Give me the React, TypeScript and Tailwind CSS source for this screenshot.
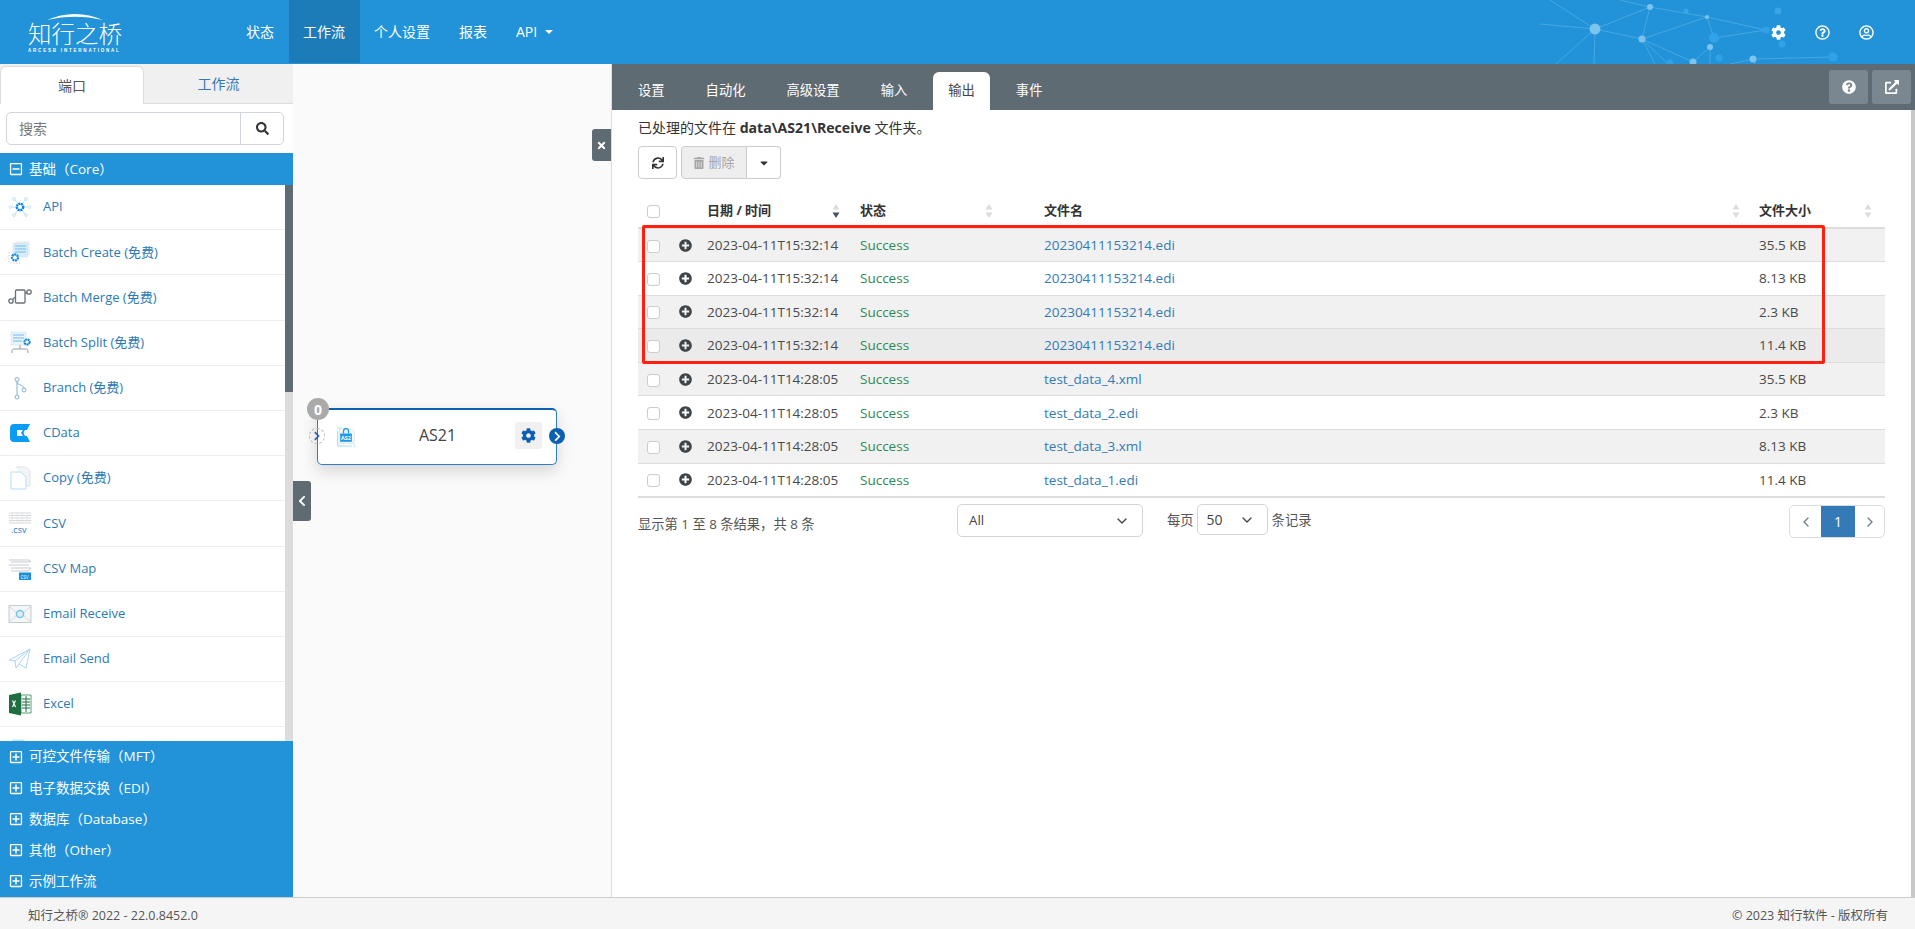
import React from "react";
import {
  FaCog, FaRegQuestionCircle, FaRegUserCircle, FaQuestionCircle, FaExternalLinkAlt, FaSearch, FaTimes,
  FaChevronLeft, FaChevronRight, FaPlusCircle, FaRegPlusSquare, FaRegMinusSquare, FaSync, FaTrashAlt, FaCaretDown,
} from "react-icons/fa";
import { ChevronDown, ChevronLeft, ChevronRight } from "lucide-react";

const cn = "font-['Open_Sans','Noto_Sans_CJK_SC',sans-serif]";

const Icons: Record<string, React.ReactNode> = {
  api: (
    <svg viewBox="0 0 24 24" className="w-6 h-6" fill="none">
      <g stroke="#b9d9ee" strokeWidth="0.8">
        <circle cx="2.5" cy="12" r="1.4" /><circle cx="21.5" cy="12" r="1.4" /><circle cx="6" cy="4" r="1.4" /><circle cx="18" cy="4" r="1.4" /><circle cx="6" cy="20" r="1.4" /><circle cx="18" cy="20" r="1.4" />
        <path d="M4 12h4M16 12h4M7 5l3 4M17 5l-3 4M7 19l3-4M17 19l-3-4" />
      </g>
      <circle cx="12" cy="12" r="3.2" stroke="#0a84e0" strokeWidth="2.4" strokeDasharray="2 .6" />
    </svg>
  ),
  create: (
    <svg viewBox="0 0 24 24" className="w-6 h-6" fill="none">
      <rect x="8" y="1" width="14" height="14" fill="#eef3f7" />
      <rect x="5" y="3" width="15" height="14" fill="#d9ecfa" stroke="#c8dff0" strokeWidth=".5" />
      <path d="M7 6h11M7 9h11M7 12h11" stroke="#6cbcf0" />
      <path d="M1 12v11h11" stroke="#c2c7cc" strokeWidth=".8" strokeDasharray="1.5 1.5" />
      <circle cx="7" cy="17.5" r="3" stroke="#0a84e0" strokeWidth="2.2" strokeDasharray="2 .6" fill="#fff" />
    </svg>
  ),
  merge: (
    <svg viewBox="0 0 24 24" className="w-6 h-6" fill="none" stroke="#6b7075" strokeWidth="1.3">
      <rect x="7.5" y="5" width="9.5" height="13" rx="1" /><circle cx="3" cy="16" r="2.2" /><circle cx="21" cy="7" r="2.2" />
      <path d="M5 14l2.5-2M17 8h2" />
    </svg>
  ),
  split: (
    <svg viewBox="0 0 24 24" className="w-6 h-6" fill="none">
      <rect x="3" y="1" width="15" height="13" fill="#e8f3fb" stroke="#cfe2f0" strokeWidth=".6" />
      <path d="M5 4h11M5 7h11M5 10h9" stroke="#6cbcf0" />
      <path d="M12 14v4M4 22v-2c0-1.5 1-2 2-2h12c1 0 2 .5 2 2v2" stroke="#8b9096" strokeWidth=".9" />
      <circle cx="19" cy="11" r="2.6" stroke="#0a84e0" strokeWidth="2" strokeDasharray="2 .5" fill="#fff" />
    </svg>
  ),
  branch: (
    <svg viewBox="0 0 24 24" className="w-6 h-6" fill="none" stroke="#7fb4d6" strokeWidth="1">
      <circle cx="9" cy="3.5" r="2" /><circle cx="9" cy="21" r="2" /><circle cx="16" cy="14" r="2" />
      <path d="M9 5.5V19M9 6c0 3 7 3 7 6" />
    </svg>
  ),
  cdata: (
    <svg viewBox="0 0 24 24" className="w-6 h-6">
      <path d="M6 3h16l-3 6h-1c-3 0-3 6 0 6h1l3 6H6c-2.500 0-4-1.500-4-4V7c0-2.500 1.500-4 4-4z" fill="#0a9cf5" />
      <path d="M9 9h6l-2 3 2 3H9z" fill="#fff" />
    </svg>
  ),
  copy: (
    <svg viewBox="0 0 24 24" className="w-6 h-6" fill="none">
      <path d="M8 1h10l4 4v15H18" stroke="#dfe3e6" fill="#f2f4f5" />
      <path d="M3 6h10l5 5v12H3z" fill="#fff" stroke="#b5def7" />
    </svg>
  ),
  csv: (
    <svg viewBox="0 0 24 24" className="w-6 h-6">
      <path d="M1 2h22M1 4.500h22M1 7h22M1 9.500h22M1 12h22" stroke="#d4d7da" />
      <path d="M4 1v12M9 1v12M14 1v12M19 1v12" stroke="#e4e6e8" />
      <text x="3" y="22" fontSize="9" fontFamily="'Open Sans',sans-serif" fill="#1e80c8">.csv</text>
    </svg>
  ),
  csvmap: (
    <svg viewBox="0 0 24 24" className="w-6 h-6">
      <path d="M1 3h20l2 2H3M1 8h20M3 11h20l-3 3H3" stroke="#c5cacf" fill="none" />
      <rect x="11" y="15.500" width="12" height="7.500" fill="#1a8fdc" />
      <text x="12.500" y="21.500" fontSize="4.500" fontFamily="'Open Sans',sans-serif" fill="#fff">CSV</text>
    </svg>
  ),
  receive: (
    <svg viewBox="0 0 24 24" className="w-6 h-6" fill="none">
      <rect x="1" y="3.500" width="22" height="17" fill="#f5f6f7" stroke="#c6cbcf" />
      <path d="M1 4l8 7M23 4l-8 7M1 20l7-6M23 20l-7-6" stroke="#d5d8db" />
      <circle cx="12" cy="12" r="3.600" stroke="#7ac0ee" strokeWidth="1.500" fill="#dcedf9" />
    </svg>
  ),
  send: (
    <svg viewBox="0 0 24 24" className="w-6 h-6" fill="none" stroke="#a8d7f5" strokeWidth="1">
      <path d="M1.500 13L22 2 18 21l-7-4-3 4-1-7z" /><path d="M22 2L7 14M22 2L11 17" />
    </svg>
  ),
  excel: (
    <svg viewBox="0 0 24 24" className="w-6 h-6">
      <path d="M13 3h10v18H13z" fill="#fff" stroke="#1d6f42" strokeWidth=".7" />
      <path d="M14 7h8M14 10h8M14 13h8M14 16h8M18 4v16" stroke="#1d6f42" strokeWidth="1" />
      <path d="M1 3l12-2.500v23L1 21z" fill="#1d6f42" />
      <path d="M4.500 8.500l3 6.500M7.500 8.500l-3 6.500" stroke="#fff" strokeWidth="1.200" />
    </svg>
  ),
  file: (
    <svg viewBox="0 0 24 24" className="w-6 h-6" fill="none">
      <path d="M5 3h10l5 5v14H5z" fill="#d8eaf7" stroke="#b5def7" />
    </svg>
  ),
};

const items: [string, string][] = [
  ["api", "API"], ["create", "Batch Create (免费)"], ["merge", "Batch Merge (免费)"], ["split", "Batch Split (免费)"],
  ["branch", "Branch (免费)"], ["cdata", "CData"], ["copy", "Copy (免费)"], ["csv", "CSV"], ["csvmap", "CSV Map"],
  ["receive", "Email Receive"], ["send", "Email Send"], ["excel", "Excel"], ["file", ""],
];

const groups = ["可控文件传输（MFT）", "电子数据交换（EDI）", "数据库（Database）", "其他（Other）", "示例工作流"];

const rows = [
  ["2023-04-11T15:32:14", "20230411153214.edi", "35.5 KB"],
  ["2023-04-11T15:32:14", "20230411153214.edi", "8.13 KB"],
  ["2023-04-11T15:32:14", "20230411153214.edi", "2.3 KB"],
  ["2023-04-11T15:32:14", "20230411153214.edi", "11.4 KB"],
  ["2023-04-11T14:28:05", "test_data_4.xml", "35.5 KB"],
  ["2023-04-11T14:28:05", "test_data_2.edi", "2.3 KB"],
  ["2023-04-11T14:28:05", "test_data_3.xml", "8.13 KB"],
  ["2023-04-11T14:28:05", "test_data_1.edi", "11.4 KB"],
];

function Sort({ active }: { active?: boolean }) {
  return (
    <svg viewBox="0 0 8 16" className="w-2 h-4 shrink-0">
      <path d="M4 1l3.500 5.500h-7z" fill="#dcdcdc" />
      <path d="M4 15L.5 9.500h7z" fill={active ? "#4a5560" : "#dcdcdc"} />
    </svg>
  );
}

function Network() {
  const lines = [
    [1595, 29, 1650, 7], [1595, 29, 1642, 39], [1650, 7, 1642, 39], [1650, 7, 1707, 17], [1642, 39, 1707, 17],
    [1642, 39, 1693, 62], [1642, 39, 1668, 64], [1642, 39, 1655, 64], [1595, 29, 1594, 64], [1595, 29, 1556, 64], [1595, 29, 1550, 0],
    [1595, 29, 1540, 24], [1714, 38, 1766, 30], [1707, 17, 1766, 30], [1693, 62, 1710, 47], [1710, 47, 1710, 64],
    [1753, 59, 1833, 57], [1620, 0, 1650, 7], [1753, 59, 1730, 64], [1707, 17, 1714, 38], [1753, 59, 1755, 64],
  ];
  const nodes: [number, number, number, string][] = [
    [1595, 29, 5.5, "#7cc3ee"], [1650, 7, 3, "#7cc3ee"], [1707, 17, 2, "#7cc3ee"], [1642, 39, 3.5, "#7cc3ee"],
    [1686, 11, 2.5, "#3aa4e6"], [1714, 38, 5, "#2ea3ea"], [1710, 47, 3, "#7cc3ee"], [1719, 58, 3.5, "#2ea3ea"],
    [1693, 62, 3.5, "#7cc3ee"], [1670, 63, 3.5, "#2ea3ea"], [1753, 59, 3.5, "#7cc3ee"], [1766, 30, 3.5, "#2ea3ea"],
    [1778, 11, 3.5, "#3aa4e6"], [1782, 44, 3.5, "#2ea3ea"], [1833, 57, 4.5, "#2ea3ea"],
  ];
  return (
    <svg viewBox="1500 0 415 64" className="absolute right-0 top-0 w-[415px] h-16 pointer-events-none">
      {lines.map((l, i) => (
        <line key={i} x1={l[0]} y1={l[1]} x2={l[2]} y2={l[3]} stroke="#6fbdec" strokeOpacity=".6" strokeWidth=".8" />
      ))}
      {nodes.map((n, i) => (
        <circle key={i} cx={n[0]} cy={n[1]} r={n[2]} fill={n[3]} />
      ))}
    </svg>
  );
}

function Header() {
  const nav = ["状态", "工作流", "个人设置", "报表"];
  return (
    <header className="relative h-16 shrink-0 bg-[#2293d8] flex text-white">
      <Network />
      <div className="w-[231.500px] relative flex flex-col items-start pl-[28px] pt-[12px]">
        <svg viewBox="0 0 56 8" className="absolute left-[47px] top-[13px] w-[56px] h-2">
          <path d="M0 7C18 -1 38 -1 56 7C38 2.500 18 2.500 0 7z" fill="#fff" />
        </svg>
        <div className="mt-[7px] text-[23.5px] leading-[28px] font-light whitespace-nowrap font-['Noto_Sans_CJK_SC',sans-serif]">知行之桥</div>
        <div className="mt-[1px] text-[4.5px] leading-[6px] font-bold tracking-[1.8px] whitespace-nowrap font-['Liberation_Sans',sans-serif]">ARCESB INTERNATIONAL</div>
      </div>
      <nav className="flex text-[14px] relative">
        {nav.map((n) => (
          <div key={n} className={`h-[63px] flex items-center px-[14.5px] ${n === "工作流" ? "bg-[#1c7cb8]" : ""}`}>{n}</div>
        ))}
        <div className="h-[63px] flex items-center px-[14.5px] gap-2">
          <span>API</span>
          <svg viewBox="0 0 8 4" className="w-2 h-1"><path d="M0 0h8L4 4z" fill="#fff" /></svg>
        </div>
      </nav>
      <div className="relative ml-auto flex items-center gap-[29px] pr-[41px] text-[15px]">
        <FaCog /><FaRegQuestionCircle /><FaRegUserCircle />
      </div>
    </header>
  );
}

function Sidebar() {
  return (
    <aside className="w-[293px] shrink-0 flex flex-col bg-white relative">
      <div className="h-10 shrink-0 flex bg-[#f0f0f0] text-[14px] pt-[2px] border-b border-[#ddd]">
        <div className="w-[144px] h-[38px] bg-white border border-b-0 border-[#ddd] rounded-t-[6px] flex items-center justify-center text-[#555]">端口</div>
        <div className="flex-1 flex items-center justify-center text-[#337ab7] pb-[2px]">工作流</div>
      </div>
      <div className="h-[49px] shrink-0 px-[6px] pt-[8px]">
        <div className="h-[33px] w-[278px] flex border border-[#d0d4dc] rounded-[5px]">
          <div className="flex-1 flex items-center pl-3 text-[14px] text-[#777]">搜索</div>
          <div className="w-[43px] border-l border-[#d0d4dc] flex items-center justify-center text-[#333] text-[13px]"><FaSearch /></div>
        </div>
      </div>
      <div className="h-8 shrink-0 bg-[#2293d8] text-white text-[13.5px] flex items-center pl-[9px] gap-[6px]">
        <FaRegMinusSquare className="text-[14px]" /><span>基础（Core）</span>
      </div>
      <div className="flex-1 min-h-0 flex overflow-hidden">
        <div className="flex-1 min-w-0">
          {items.map(([k, t]) => (
            <div key={k} className="h-[45.2px] border-b border-[#eee] flex items-center pl-[8px] gap-[11px] text-[13px] text-[#2b7ab5]">
              {Icons[k]}{t && <span>{t}</span>}
            </div>
          ))}
        </div>
        <div className="w-2 bg-[#dcdcdc] shrink-0"><div className="h-[207px] bg-[#5f6b73]" /></div>
      </div>
      <div className="h-[156px] shrink-0 bg-[#2293d8] text-white text-[13.5px] flex flex-col">
        {groups.map((g) => (
          <div key={g} className="flex-1 flex items-center pl-[9px] gap-[6px]">
            <FaRegPlusSquare className="text-[14px]" /><span>{g}</span>
          </div>
        ))}
      </div>
    </aside>
  );
}

function Canvas() {
  return (
    <main className="w-[319px] shrink-0 bg-[#fafafa] border-r border-[#ddd] relative">
      <div className="absolute left-0 top-[417px] w-[18px] h-10 bg-[#5f6b73] rounded-r-[3px] flex items-center justify-center text-white text-[12px]"><FaChevronLeft /></div>
      <div className="absolute right-0 top-[65px] w-[19px] h-8 bg-[#5f6b73] rounded-l-[3px] flex items-center justify-center text-white text-[11px]"><FaTimes /></div>
      <div className="absolute left-[24px] top-[344px] w-[240px] h-[57px] bg-white rounded-[5px] border border-[#2f7cc4] border-t-2 border-t-[#0d5fb0] shadow-[0_6px_16px_rgba(0,0,0,0.15)] flex items-center pl-[18px] pr-[14px]">
        <svg viewBox="0 0 24 28" className="w-5 h-6 shrink-0 mb-[3px]" fill="none">
          <path d="M4 5h14l4 4v14H4z" fill="#f3f5f6" stroke="#e1e4e6" />
          <path d="M2 8v18h15" stroke="#8ed0f5" />
          <rect x="5" y="11" width="14" height="10" fill="#1c9be8" />
          <path d="M9 11V8c0-4 6-4 6 0v3" stroke="#1c9be8" strokeWidth="1.500" />
          <text x="6" y="19" fontSize="6.500" fontWeight="700" fontFamily="'Open Sans',sans-serif" fill="#fff">AS2</text>
          <path d="M1 2l2 2-2 2M4 2l2 2-2 2M17 24l2 2-2 2M21 24l2 2-2 2" stroke="#8ed0f5" strokeWidth=".7" />
        </svg>
        <div className="flex-1 text-center text-[16px] text-[#444] pb-[4px] pl-[4px]">AS21</div>
        <div className="w-[27px] h-[27px] bg-[#f0f0f0] rounded-[3px] flex items-center justify-center text-[#0d5fb0] text-[15px] mb-[3px]"><FaCog /></div>
      </div>
      <div className="absolute left-[16px] top-[364px] w-4 h-4 rounded-full border border-dashed border-[#bbb] flex items-center justify-center text-[#2a5bb5] text-[10px]"><FaChevronRight /></div>
      <div className="absolute left-[256px] top-[364px] w-4 h-4 rounded-full bg-[#0d5fb0] flex items-center justify-center text-white text-[11px]"><FaChevronRight /></div>
      <div className="absolute left-[14px] top-[334px] w-[22px] h-[22px] rounded-full bg-[#aaaaaa] flex items-center justify-center text-white text-[14px] font-bold">0</div>
    </main>
  );
}

function Table() {
  return (
    <div className="relative mt-[15px]">
      <table className="table-fixed w-[1247px] border-collapse text-[13.5px] text-[#4a4a4a]">
        <colgroup>
          <col className="w-[32px]" /><col className="w-[29px]" /><col className="w-[153px]" /><col className="w-[184px]" /><col className="w-[715px]" /><col className="w-[134px]" />
        </colgroup>
        <thead>
          <tr className="h-[34px] border-b-2 border-[#ddd] text-[13px] font-bold text-[#333]">
            <th className="pl-[9px] font-normal text-left align-middle"><div className="w-[13px] h-[13px] mt-[2px] border border-[#ccc] rounded-[3px] bg-white" /></th>
            <th />
            <th className="pl-2 pr-3 text-left"><div className="flex items-center justify-between">日期 / 时间<Sort active /></div></th>
            <th className="pl-2 pr-[43px] text-left"><div className="flex items-center justify-between">状态<Sort /></div></th>
            <th className="pl-2 pr-[11px] text-left"><div className="flex items-center justify-between">文件名<Sort /></div></th>
            <th className="pl-2 pr-[13px] text-left"><div className="flex items-center justify-between">文件大小<Sort /></div></th>
          </tr>
        </thead>
        <tbody>
          {rows.map((r, i) => (
            <tr key={i} className={`h-[33.6px] border-b border-[#ddd] ${i === 3 ? "bg-[#ebebeb]" : i % 2 === 0 ? "bg-[#f1f1f1]" : "bg-white"}`}>
              <td className="pl-[9px]"><div className="w-[13px] h-[13px] mt-[2px] border border-[#ccc] rounded-[3px] bg-white" /></td>
              <td className="pl-[9px] text-[#3f4448] text-[13px]"><FaPlusCircle /></td>
              <td className="pl-2 whitespace-nowrap">{r[0]}</td>
              <td className="pl-2 text-[#2c8a55]">Success</td>
              <td className="pl-2 text-[#337ab7]">{r[1]}</td>
              <td className="pl-2">{r[2]}</td>
            </tr>
          ))}
        </tbody>
      </table>
      <div className="absolute left-[4px] top-[31px] w-[1183px] h-[139px] border-[3px] border-[#ff2010] rounded-[2px] pointer-events-none" />
      <div className="h-[1px] bg-[#ddd]" />
    </div>
  );
}

function Panel() {
  const tabs = ["设置", "自动化", "高级设置", "输入", "输出", "事件"];
  return (
    <section className="flex-1 min-w-0 flex flex-col bg-white">
      <div className="h-[46px] shrink-0 bg-[#5f6b73] flex items-end text-[13.3px] text-white pl-[10.5px] pr-1 relative">
        {tabs.map((t) => (
          <div key={t} className={`h-[38px] flex items-center justify-center px-[15.5px] mr-[10px] ${t === "输出" ? "bg-white text-[#444] rounded-t-[6px]" : ""}`}>{t}</div>
        ))}
        <div className="ml-auto self-start mt-[6px] flex gap-1">
          <div className="w-[39px] h-[34px] bg-[#7a8791] rounded-[3px] flex items-center justify-center text-[14px]"><FaQuestionCircle /></div>
          <div className="w-[39px] h-[34px] bg-[#7a8791] rounded-[3px] flex items-center justify-center text-[14px]"><FaExternalLinkAlt /></div>
        </div>
      </div>
      <div className="flex-1 min-h-0 flex">
        <div className="flex-1 min-w-0 pl-[26px] pr-[26px]">
          <div className="h-5 mt-2 text-[14px] leading-5 text-[#333] whitespace-nowrap">已处理的文件在 <b className="font-bold text-[14.1px]">data\AS21\Receive</b> 文件夹。</div>
          <div className="flex mt-2 h-[33px] text-[14px]">
            <div className="w-[39px] border border-[#ccc] rounded-[4px] flex items-center justify-center text-[#333] text-[12px]"><FaSync /></div>
            <div className="ml-1 w-[66px] bg-[#eeeeee] border border-[#ccc] rounded-l-[4px] flex items-center justify-center gap-[3px] text-[#a5a5a5] text-[13px]"><FaTrashAlt className="text-[12px]" />删除</div>
            <div className="w-[34px] border border-l-0 border-[#ccc] rounded-r-[4px] flex items-center justify-center text-[#333] text-[12px]"><FaCaretDown /></div>
          </div>
          <Table />
          <div className="flex items-start text-[13.3px] text-[#555]">
            <div className="w-[319px] mt-[16px] leading-5 whitespace-nowrap">显示第 1 至 8 条结果，共 8 条</div>
            <div className="w-[186px] h-[33px] mt-[6px] border border-[#d0d4dc] rounded-[5px] flex items-center justify-between pl-[11px] pr-[12px] text-[#444]">All<ChevronDown size={16} /></div>
            <div className="ml-[24px] mt-[12px] leading-5 whitespace-nowrap">每页</div>
            <div className="ml-[3px] w-[71px] h-[31px] mt-[6px] border border-[#d0d4dc] rounded-[5px] flex items-center justify-between pl-[9px] pr-[12px] text-[#444] text-[14px]">50<ChevronDown size={16} /></div>
            <div className="ml-1 mt-[12px] leading-5 whitespace-nowrap">条记录</div>
            <div className="ml-auto mt-[7px] h-[33px] w-[96px] flex border border-[#ddd] rounded-[5px] text-[#6f7f8f]">
              <div className="w-[31px] flex items-center justify-center"><ChevronLeft size={16} /></div>
              <div className="w-[34px] bg-[#337ab7] text-white flex items-center justify-center text-[14px]">1</div>
              <div className="flex-1 flex items-center justify-center"><ChevronRight size={16} /></div>
            </div>
          </div>
        </div>
        <div className="w-1 shrink-0 bg-[#c8c8c8]" />
      </div>
    </section>
  );
}

export default function App() {
  return (
    <div className={`${cn} h-screen w-full flex flex-col overflow-hidden bg-white`}>
      <Header />
      <div className="flex-1 min-h-0 flex">
        <Sidebar />
        <Canvas />
        <Panel />
      </div>
      <footer className="h-8 shrink-0 bg-[#f5f5f5] border-t border-[#ccc] flex items-center justify-between pl-[28px] pr-[27px] pt-[6px] text-[12.5px] text-[#555]">
        <span>知行之桥® 2022 - 22.0.8452.0</span>
        <span>© 2023 知行软件 - 版权所有</span>
      </footer>
    </div>
  );
}
